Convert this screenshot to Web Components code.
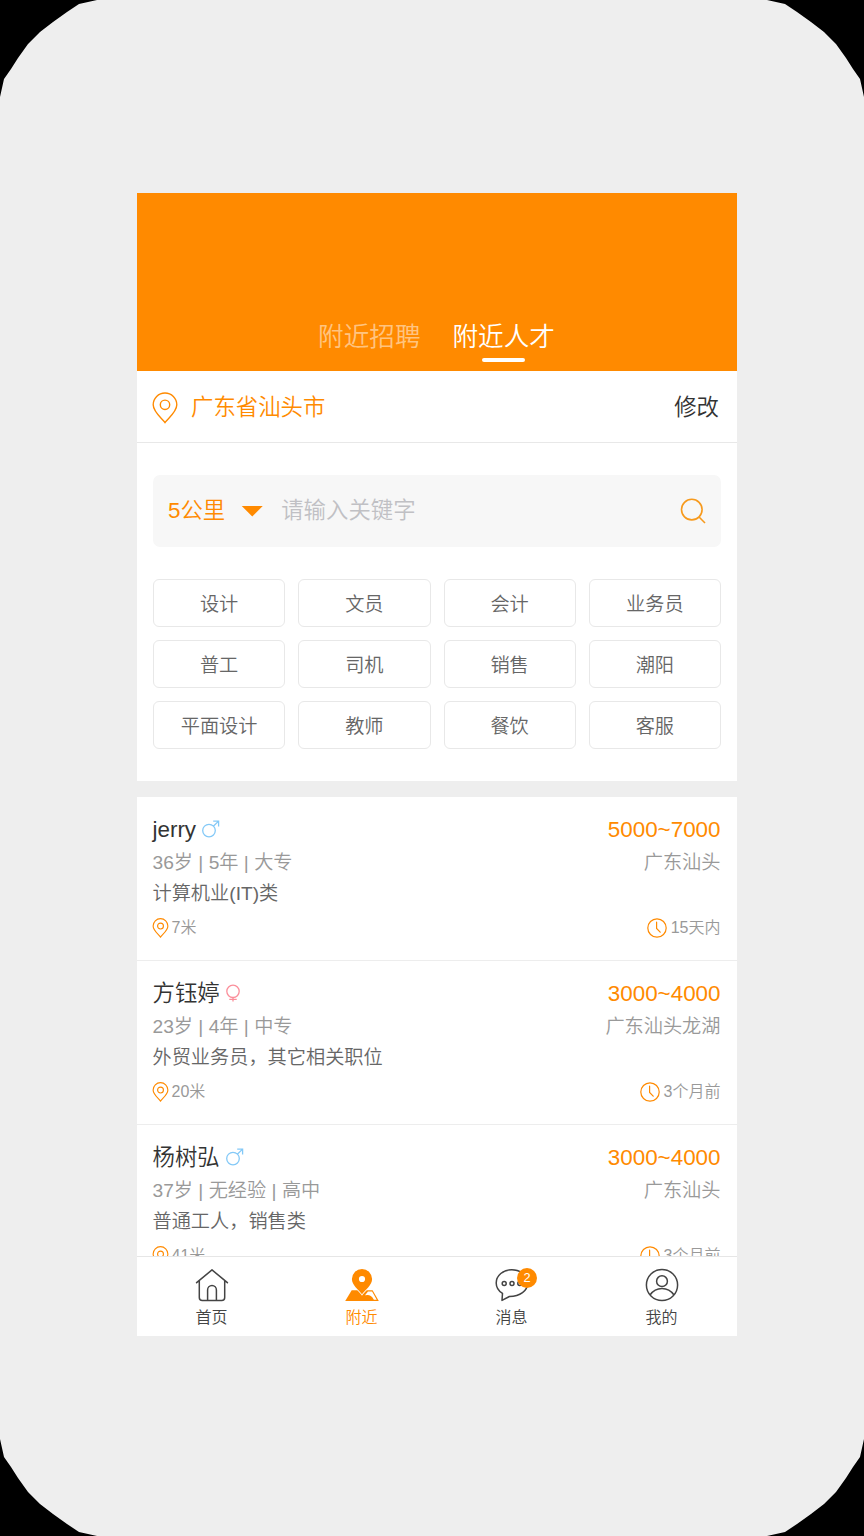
<!DOCTYPE html>
<html lang="zh-CN">
<head>
<meta charset="utf-8">
<title>附近人才</title>
<style>
html{background:#000}
body{margin:0;background:#000;font-family:"Liberation Sans","Noto Sans CJK SC",sans-serif;font-weight:350;color:#333}
</style>
</head>
<body>
<app-frame>
  <app-header>
    <header-tab>附近招聘</header-tab>
    <header-tab active>附近人才</header-tab>
  </app-header>
  <location-bar action="修改">广东省汕头市</location-bar>
  <search-panel>
    <search-box distance="5公里" hint="请输入关键字"></search-box>
    <tag-grid>
      <tag-item>设计</tag-item><tag-item>文员</tag-item><tag-item>会计</tag-item><tag-item>业务员</tag-item>
      <tag-item>普工</tag-item><tag-item>司机</tag-item><tag-item>销售</tag-item><tag-item>潮阳</tag-item>
      <tag-item>平面设计</tag-item><tag-item>教师</tag-item><tag-item>餐饮</tag-item><tag-item>客服</tag-item>
    </tag-grid>
  </search-panel>
  <talent-list>
    <talent-card name="jerry" gender="male" salary="5000~7000" meta="36岁 | 5年 | 大专" area="广东汕头" job="计算机业(IT)类" distance="7米" time="15天内"></talent-card>
    <talent-card name="方钰婷" gender="female" salary="3000~4000" meta="23岁 | 4年 | 中专" area="广东汕头龙湖" job="外贸业务员，其它相关职位" distance="20米" time="3个月前"></talent-card>
    <talent-card name="杨树弘" gender="male" salary="3000~4000" meta="37岁 | 无经验 | 高中" area="广东汕头" job="普通工人，销售类" distance="41米" time="3个月前"></talent-card>
  </talent-list>
  <tab-bar>
    <tab-item icon="home">首页</tab-item>
    <tab-item icon="near" active>附近</tab-item>
    <tab-item icon="chat" badge="2">消息</tab-item>
    <tab-item icon="user">我的</tab-item>
  </tab-bar>
</app-frame>
<script>
const ICONS = {
  pin: '<svg width="26" height="32" viewBox="0 0 26 32" fill="none" stroke="#ff8a00" stroke-width="1.4"><path d="M13 30.5C10 26.4 1.200 20 1.200 12.800a11.800 11.800 0 0 1 23.600 0C24.800 20 16 26.400 13 30.500Z"/><circle cx="13" cy="12.800" r="4.700"/></svg>',
  clock: '<svg width="20" height="20" viewBox="0 0 20 20" fill="none" stroke="#ff8a00" stroke-width="1.200" stroke-linecap="round"><circle cx="10" cy="10" r="9.200"/><path d="M9.600 4.200v6.300l3.600 3.700"/></svg>',
  male: '<svg width="18" height="18" viewBox="0 0 18 18" fill="none" stroke="#84c9f7" stroke-width="1.300"><circle cx="7" cy="10.600" r="6.300"/><path d="M11.300 6.200 16.600 1.100M11.200 1.100h5.400v5.400"/></svg>',
  female: '<svg width="18" height="18" viewBox="0 0 18 18" fill="none" stroke="#fb8f9b" stroke-width="1.300"><circle cx="7" cy="7.300" r="6.200"/><path d="M7 13.400v4M3.300 15.300h7.400"/></svg>',
  search: '<svg width="26" height="26" viewBox="0 0 26 26" fill="none" stroke="#f79a1d" stroke-width="1.600"><circle cx="11.800" cy="11.600" r="10.300"/><path d="M18.800 18.800 25 25"/></svg>',
  home: '<svg width="34" height="34" viewBox="0 0 34 34" fill="none" stroke="#444" stroke-width="1.500" stroke-linejoin="round" stroke-linecap="round"><path d="M1.600 14.700 17 1.900 32.400 14.700M4.300 12.800v16.600a3 3 0 0 0 3 3h19.400a3 3 0 0 0 3-3V12.800M12.600 32.200V22a4.400 4.400 0 0 1 8.800 0v10.200"/></svg>',
  near: '<svg width="34" height="34" viewBox="0 0 34 34"><path fill="#ff8a00" d="M6.700 22.300H27.600L33.800 33H.2Z"/><path fill="#fff" d="M23 23.600H27.100L31.700 31.700H28.900L27.300 29.300C26.200 28 24.800 27.200 22.800 27L20 27.300Z"/><path fill="#ff8a00" fill-rule="evenodd" stroke="#fff" stroke-width="1.600" paint-order="stroke" d="M17 1a10.100 10.100 0 0 1 10.100 10.100C27.100 17.400 20.500 21.600 17 26.300 13.500 21.600 6.900 17.400 6.900 11.100A10.100 10.100 0 0 1 17 1Zm0 6.900a3.100 3.100 0 1 0 0 6.200 3.100 3.100 0 0 0 0-6.200Z"/></svg>',
  chat: '<svg width="34" height="34" viewBox="0 0 34 34" fill="none" stroke="#444" stroke-width="1.500" stroke-linejoin="round"><path d="M7.500 25.400C3.600 22.900 1.200 19.200 1.200 14.900 1.200 7.500 8.200 1.700 16.900 1.700S32.600 7.500 32.600 14.900c0 7.900-7.500 13.500-18.200 13.600L7 32.400Z"/><circle cx="9.200" cy="15.600" r="2"/><circle cx="17" cy="15.600" r="2"/><circle cx="24.800" cy="15.600" r="2"/></svg>',
  user: '<svg width="34" height="34" viewBox="0 0 34 34" fill="none" stroke="#444" stroke-width="1.500"><circle cx="17" cy="17" r="15.600"/><circle cx="17" cy="13.200" r="5.400"/><path d="M5 27c3-4.300 7-6.500 12-6.500S26 22.700 29 27"/></svg>'
};

function define(tag, render) {
  customElements.define(tag, class extends HTMLElement {
    constructor() { super(); this.attachShadow({ mode: 'open' }); }
    connectedCallback() {
      const t = document.createElement('template');
      t.innerHTML = render(n => this.getAttribute(n) || '');
      this.shadowRoot.replaceChildren(t.content.cloneNode(true));
    }
  });
}

define('app-frame', () => `<style>
:host{display:flex;box-sizing:border-box;width:864px;height:1536px;padding:193px 127px 200px 137px;background:#eee;
clip-path:path("M97 0L88 2 79 4 67 12 53 22 40 32 28 44 18 58 11 69 4 79 2 88 0 97V1439L2 1448 4 1457 11 1467 18 1478 28 1492 40 1504 53 1514 67 1524 79 1532 88 1534 97 1536H767L776 1534 785 1532 797 1524 811 1514 824 1504 836 1492 846 1478 853 1467 860 1457 862 1448 864 1439V97L862 88 860 79 853 69 846 58 836 44 824 32 811 22 797 12 785 4 776 2 767 0Z")}
main{width:600px;height:1143px;display:flex;flex-direction:column;overflow:hidden}
</style><main><slot></slot></main>`);

define('app-header', () => `<style>
:host{display:flex;flex:none;box-sizing:border-box;height:178px;background:#ff8a00;justify-content:center;align-items:flex-end;gap:32px;padding:0 1px 9px 0}
</style><slot></slot>`);

define('header-tab', () => `<style>
:host{display:flex;flex-direction:column;align-items:center;font-size:25.6px;line-height:38px;color:rgba(255,255,255,.52)}
:host([active]){color:#fff}
i{width:43px;height:4px;border-radius:2px;margin-top:2px}
:host([active]) i{background:#fff}
</style><span><slot></slot></span><i></i>`);

define('location-bar', a => `<style>
:host{display:flex;flex:none;box-sizing:border-box;height:72px;border-bottom:1px solid #e8e8e8;padding:2px 18px 0 15px;align-items:center;background:#fff;font-size:22.4px;line-height:34px}
svg{margin-right:13px}
.place{flex:1;color:#ff8a00}
</style>${ICONS.pin}<span class="place"><slot></slot></span><span>${a('action')}</span>`);

define('search-panel', () => `<style>
:host{display:block;flex:none;box-sizing:border-box;height:338px;padding:32px 16px;background:#fff}
</style><slot></slot>`);

define('search-box', a => `<style>
:host{display:flex;box-sizing:border-box;height:72px;background:#f7f7f7;border-radius:7px;align-items:center;padding:0 15px;font-size:22.4px;line-height:34px;color:#ff8a00}
i{width:22px;height:11px;margin:0 18px 0 16px;background:#ff8a00;clip-path:polygon(0 0,100% 0,50% 100%)}
.hint{flex:1;color:#c0c0c4}
</style><span>${a('distance')}</span><i></i><span class="hint">${a('hint')}</span>${ICONS.search}`);

define('tag-grid', () => `<style>
:host{display:grid;grid-template-columns:repeat(4,1fr);grid-auto-rows:48px;gap:13px;margin-top:32px}
</style><slot></slot>`);

define('tag-item', () => `<style>
:host{display:flex;align-items:center;justify-content:center;padding-top:3px;border:1px solid #e8e8e8;border-radius:6px;font-size:19.2px;line-height:30px;color:#666}
</style><span><slot></slot></span>`);

define('talent-list', () => `<style>
:host{display:block;flex:1;min-height:0;margin-top:16px;overflow:hidden;background:#fff}
</style><slot></slot>`);

define('talent-card', a => `<style>
:host{display:block;box-sizing:border-box;height:164px;padding:16px 16.5px 0 15.5px;border-bottom:1px solid #ededed}
div{display:flex;align-items:center;justify-content:space-between}
div span{display:flex;align-items:center}
.top{height:33px;font-size:22.4px;line-height:33px}
.top svg{margin:-2px 0 0 6px}
b{font-weight:inherit;color:#ff8a00}
.meta{height:32px;padding-top:1px;font-size:19.2px;line-height:32px;color:#999}
.job{height:30px;font-size:19.2px;line-height:30px;color:#666}
.foot{height:32px;margin-top:3px;font-size:16px;line-height:32px;color:#999}
.foot svg{margin:-1px 4px 0 0}
.foot span:first-child svg{width:17px;height:20px;margin:-1px 3px 0 -1px;stroke-width:1.8}
</style>
<div class="top"><span>${a('name')}${ICONS[a('gender')]}</span><b>${a('salary')}</b></div>
<div class="meta"><label>${a('meta')}</label><label>${a('area')}</label></div>
<div class="job"><label>${a('job')}</label></div>
<div class="foot"><span>${ICONS.pin}${a('distance')}</span><span>${ICONS.clock}${a('time')}</span></div>`);

define('tab-bar', () => `<style>
:host{display:grid;flex:none;grid-template-columns:repeat(4,150px);box-sizing:border-box;height:80px;border-top:1px solid #e6e6e6;background:#fff}
</style><slot></slot>`);

define('tab-item', a => `<style>
:host{display:flex;flex-direction:column;align-items:center;padding:11px 1px 0 0;font-size:16px;line-height:24px;color:#444}
:host([active]){color:#ff8a00}
.icon{position:relative;width:34px;height:34px;margin-bottom:4px}
svg{display:block}
em{position:absolute;left:22.5px;top:-.5px;width:20px;height:20px;border-radius:50%;background:#ff8a00;color:#fff;font-style:normal;font-size:12.8px;line-height:20px;text-align:center}
</style><div class="icon">${ICONS[a('icon')]}${a('badge') ? `<em>${a('badge')}</em>` : ''}</div><span><slot></slot></span>`);
</script>
</body>
</html>
